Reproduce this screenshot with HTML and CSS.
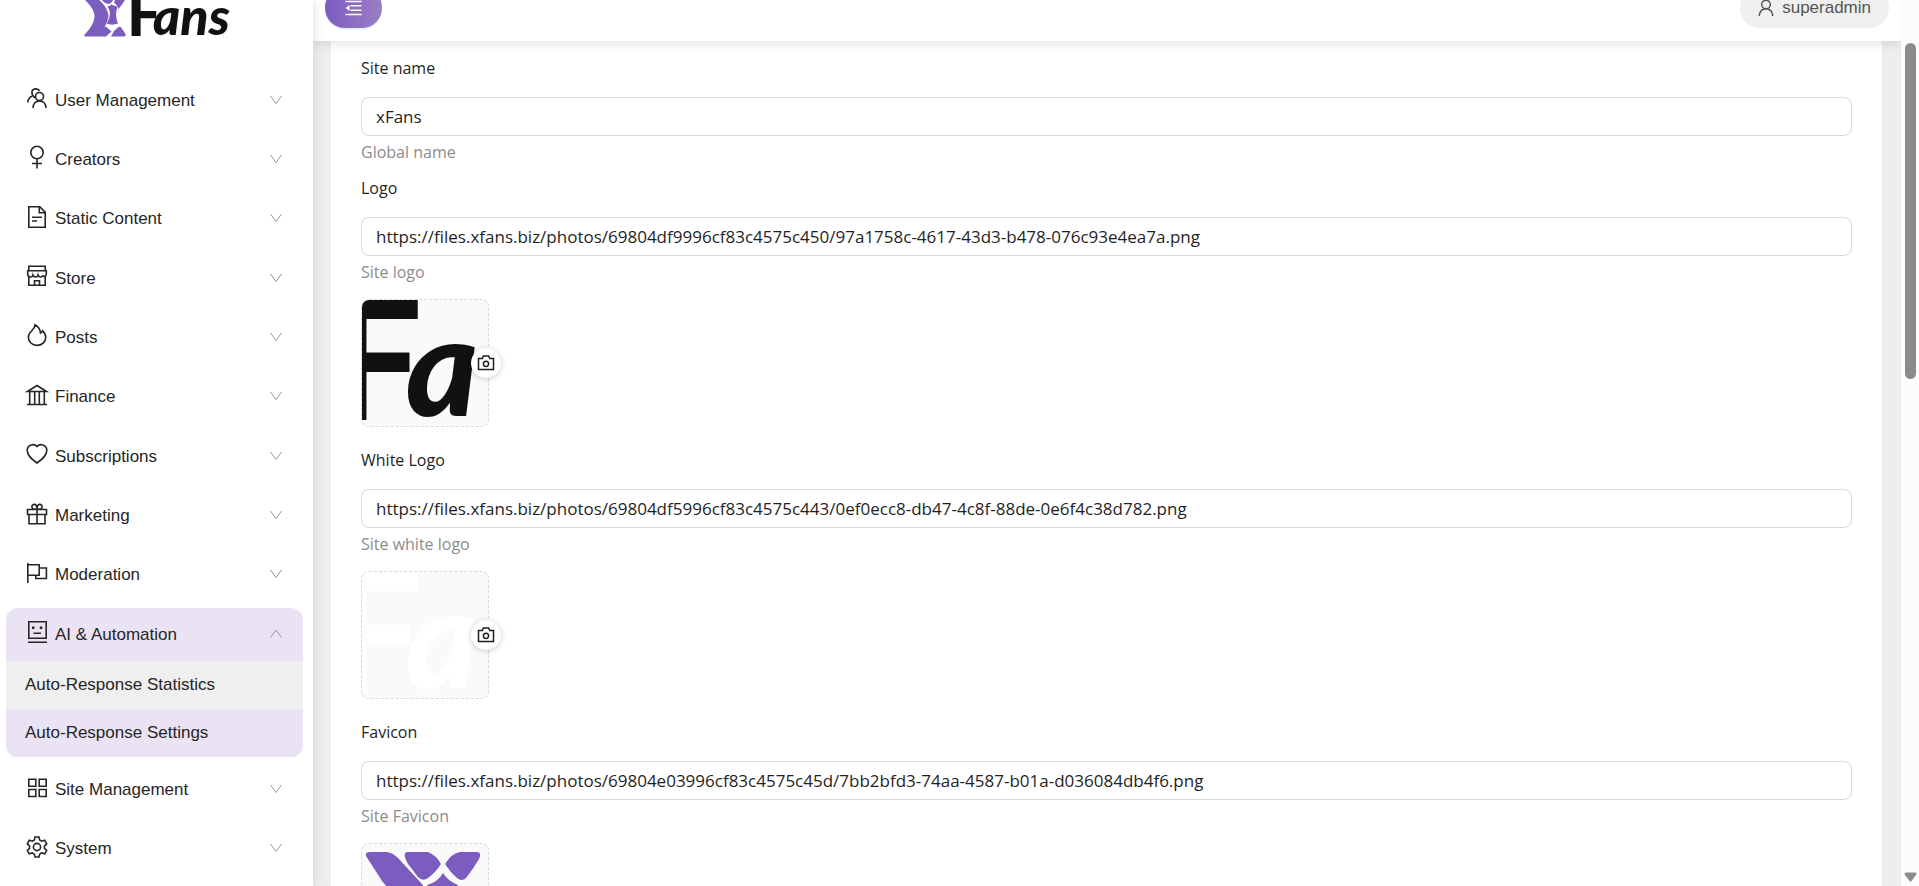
FILE: index.html
```html
<!DOCTYPE html>
<html lang="en">
<head>
    <meta charset="UTF-8">
    <meta name="viewport" content="width=device-width, initial-scale=1.0">
    <title>xFans - Site Settings</title>
    <link rel="stylesheet" href="styles.css">
</head>
<body>
    <!-- Shared icons -->
    <svg class="sprite" aria-hidden="true">
        <symbol id="down" viewBox="0 0 14 14"><path d="M1.5 3 7 10.5 12.5 3"/></symbol>
        <symbol id="up" viewBox="0 0 14 14"><path d="M1.5 10.5 7 3 12.5 10.5"/></symbol>
        <symbol id="camera" viewBox="0 0 18 16"><path d="M1.5 3.5h3.700l1.200-2.400h5.200l1.200 2.400h3.700v11h-15z"/><circle cx="9" cy="8.800" r="2.600"/></symbol>
    </svg>

    <div class="layout">
        <!-- Sidebar -->
        <aside class="sidebar">
            <a class="brand" href="#" aria-label="xFans">
                <svg class="brand-logo" viewBox="0 0 156 40">
                    <g class="brand-mark">
                        <path d="M1 0H15C20 4 24 10 24.500 16C23.500 23 19 30 15 36.500H1.500C0 36.500 0 35 1 34C6 29 10.500 22 10.500 16C10.500 10 5 4 1 0Z"/>
                        <path d="M17.500 0H29Q27 4 24 4Q20.500 3 17.500 0Z"/>
                        <path d="M31 0H41C39 3 36 7 34.500 9C33.500 6 32 4 30 2.500Z"/>
                        <path d="M27.500 4.500Q30 6 33.500 6.500C31.500 12 31.500 18 34 23.500C30 25 26 25 22.500 23.500C26 18 27.500 12 23.500 6.500Q26 6 27.500 4.500Z"/>
                        <path d="M15 36.500C14 36 16 33 19.500 28Q21 26 23 27.500L27.500 31.500L22 36.500Z"/>
                        <path d="M27 36.500L30 31L34 27.500Q36 26 37.500 28L41.500 34Q42 36.500 40 36.500Z"/>
                    </g>
                    <text x="43" y="36" class="logo-cap logo-cap-small">F</text>
                    <text x="69" y="35" class="logo-rest logo-rest-small">ans</text>
                </svg>
            </a>

            <nav class="menu">
                <button class="menu-item" type="button">
                    <svg class="icon" viewBox="0 0 22 22"><circle cx="13.500" cy="9.500" r="4"/><path d="M7 21c.3-4.500 3-7 6.500-7s6.200 2.500 6.500 7M9.500 11C5 8.500 4.500 2.500 9.300 1.900c2-.2 3.500.5 4.200 2M1.700 15.500c.2-3 1.800-5.300 4.400-6.300"/></svg>
                    <span>User Management</span>
                    <svg class="arrow"><use href="#down"/></svg>
                </button>
                <button class="menu-item" type="button">
                    <svg class="icon" viewBox="0 0 22 22"><circle cx="11" cy="6.500" r="6.200"/><path d="M11 13v9.500M6 17.500h10"/></svg>
                    <span>Creators</span>
                    <svg class="arrow"><use href="#down"/></svg>
                </button>
                <button class="menu-item" type="button">
                    <svg class="icon" viewBox="0 0 22 22"><path d="M2.800.8h11l5.400 5.400v15H2.800zM13.300.8v6h6M6 11.300h10M6 15h5"/></svg>
                    <span>Static Content</span>
                    <svg class="arrow"><use href="#down"/></svg>
                </button>
                <button class="menu-item" type="button">
                    <svg class="icon" viewBox="0 0 22 22"><path d="M2.800 1.300h16.400v4.500H2.800zM2.500 5.800H1.700v3.500c0 3.300 4.600 3.500 5.200.8.800 2.600 4.500 2.600 5.100 0 .8 2.600 4.400 2.600 5 0 .6 2.700 3.300 1.500 3.300-1.500V5.800h-1M2.800 11.500v8.700h16.400v-8.700M8.500 20v-4.300h5V20"/></svg>
                    <span>Store</span>
                    <svg class="arrow"><use href="#down"/></svg>
                </button>
                <button class="menu-item" type="button">
                    <svg class="icon" viewBox="0 0 22 22"><path d="M9 .8c3.500 2 5.300 5 5.500 8.300 1.200-.6 1.800-1.400 2.100-2.300 2 1.700 3.100 4 3.100 6.400 0 4.700-3.900 8.200-8.700 8.200s-8.600-3.600-8.600-8.200c0-3 1.600-5 3.600-6.700C8 4.800 9 3 9 .8z"/></svg>
                    <span>Posts</span>
                    <svg class="arrow"><use href="#down"/></svg>
                </button>
                <button class="menu-item" type="button">
                    <svg class="icon" viewBox="0 0 22 22"><path d="M1.500 7.500 11 1.500l9.500 6zM1 20.500h20M3.700 8v12M8.700 8v12M13.300 8v12M18.300 8v12"/></svg>
                    <span>Finance</span>
                    <svg class="arrow"><use href="#down"/></svg>
                </button>
                <button class="menu-item" type="button">
                    <svg class="icon" viewBox="0 0 22 22"><path d="M11 20C5.500 16 1.200 12.500 1.200 7.500c0-5.600 7-7.500 9.800-4 2.800-3.500 9.800-1.600 9.800 4C20.800 12.500 16.500 16 11 20z"/></svg>
                    <span>Subscriptions</span>
                    <svg class="arrow"><use href="#down"/></svg>
                </button>
                <button class="menu-item" type="button">
                    <svg class="icon" viewBox="0 0 22 22"><path d="M1.500 6.500h19v5h-19zM3 11.500v9.300h16v-9.300M11 6.500v14"/><path d="M11 6.300H8.500C5 6.300 5 1.400 8.300 1.400c2 0 2.700 1.800 2.700 4.900zM11 6.300h2.500c3.500 0 3.500-4.900.2-4.900-2 0-2.700 1.800-2.700 4.900z"/></svg>
                    <span>Marketing</span>
                    <svg class="arrow"><use href="#down"/></svg>
                </button>
                <button class="menu-item" type="button">
                    <svg class="icon" viewBox="0 0 22 22"><path d="M1.800 1v20M1.800 2.800h11.400v10.400H1.800M13.200 6h7.200v10.500H9.800v-3.300"/></svg>
                    <span>Moderation</span>
                    <svg class="arrow"><use href="#down"/></svg>
                </button>

                <!-- Opened group -->
                <div class="menu-group">
                    <button class="menu-item" type="button" aria-expanded="true">
                        <svg class="icon" viewBox="0 0 22 22"><path d="M2.800.8h17.400v16.400H2.800zM2 21.200h19M7.500 12.200h7.500"/><path class="solid" d="M6 5.500h2.500V8H6zM13.800 5.500h2.500V8h-2.500z"/></svg>
                        <span>AI &amp; Automation</span>
                        <svg class="arrow"><use href="#up"/></svg>
                    </button>
                    <a class="submenu-item" href="#">Auto-Response Statistics</a>
                    <a class="submenu-item active" href="#">Auto-Response Settings</a>
                </div>

                <button class="menu-item" type="button">
                    <svg class="icon" viewBox="0 0 22 22"><path d="M2.800 2.300h7v7h-7zM13.200 2.300h7v7h-7zM2.800 12.500h7v7h-7zM13.200 12.500h7v7h-7z"/></svg>
                    <span>Site Management</span>
                    <svg class="arrow"><use href="#down"/></svg>
                </button>
                <button class="menu-item" type="button">
                    <svg class="icon" viewBox="0 0 22 22"><circle cx="11" cy="11" r="3.600"/><path d="M9 1h4l.6 2.900 2.200 1.300 2.900-.9 2 3.500-2.200 2v2.500l2.200 2-2 3.500-2.900-.9-2.200 1.300L13 21H9l-.6-2.800-2.200-1.300-2.900.9-2-3.500 2.200-2V9.800l-2.200-2 2-3.500 2.900.9 2.200-1.300z"/></svg>
                    <span>System</span>
                    <svg class="arrow"><use href="#down"/></svg>
                </button>
            </nav>
        </aside>

        <div class="main">
            <!-- Top bar -->
            <header class="header">
                <button class="toggle" type="button" aria-label="Collapse menu">
                    <svg viewBox="0 0 16 16"><path d="M0 1.500h16M5 5.700h11M5 10.200h11M0 14.500h16"/><path class="solid" d="M0 8l4-3v6z"/></svg>
                </button>
                <button class="account" type="button">
                    <svg viewBox="0 0 16 18"><circle cx="8" cy="5.500" r="4.300"/><path d="M1.200 17c.4-4.500 3-7.200 6.800-7.200s6.400 2.700 6.800 7.200"/></svg>
                    <span>superadmin</span>
                </button>
            </header>

            <!-- Settings form -->
            <main class="content">
                <form class="card">
                    <div class="field">
                        <label for="site-name">Site name</label>
                        <input id="site-name" type="text" value="xFans">
                        <p class="help">Global name</p>
                    </div>

                    <div class="field">
                        <label for="logo">Logo</label>
                        <input id="logo" type="text" value="https://files.xfans.biz/photos/69804df9996cf83c4575c450/97a1758c-4617-43d3-b478-076c93e4ea7a.png">
                        <p class="help">Site logo</p>
                        <div class="upload">
                            <div class="preview">
                                <svg viewBox="0 0 126 126">
                                    <text x="-33" y="120" class="logo-cap">F</text>
                                    <text x="44" y="116" class="logo-rest">a</text>
                                </svg>
                            </div>
                            <button class="camera" type="button" aria-label="Upload logo"><svg><use href="#camera"/></svg></button>
                        </div>
                    </div>

                    <div class="field">
                        <label for="white-logo">White Logo</label>
                        <input id="white-logo" type="text" value="https://files.xfans.biz/photos/69804df5996cf83c4575c443/0ef0ecc8-db47-4c8f-88de-0e6f4c38d782.png">
                        <p class="help">Site white logo</p>
                        <div class="upload">
                            <div class="preview preview-white">
                                <svg viewBox="0 0 126 126">
                                    <text x="-33" y="120" class="logo-cap">F</text>
                                    <text x="44" y="116" class="logo-rest">a</text>
                                </svg>
                            </div>
                            <button class="camera" type="button" aria-label="Upload white logo"><svg><use href="#camera"/></svg></button>
                        </div>
                    </div>

                    <div class="field">
                        <label for="favicon">Favicon</label>
                        <input id="favicon" type="text" value="https://files.xfans.biz/photos/69804e03996cf83c4575c45d/7bb2bfd3-74aa-4587-b01a-d036084db4f6.png">
                        <p class="help">Site Favicon</p>
                        <div class="upload">
                            <div class="preview">
                                <svg class="brand-mark" viewBox="0 0 126 126">
                                    <path d="M4 12Q3 8 8 8H24Q30 8 36 14L60 40Q68 52 68 63Q60 90 42 118H6Q4 116 8 110Q32 84 34 63Q30 48 20 37Z"/>
                                    <path d="M45 8H66Q74 11 79 20Q74 28 66 34Q61 38 56 33L46 20Q40 9 45 8Z"/>
                                    <path d="M83 20Q90 9 98 8H115Q120 8 117 15Q112 24 104 34Q100 38 95 34Q88 28 83 20Z"/>
                                    <path d="M81 29Q86 37 96 41Q86 62 96 86Q80 92 64 86Q78 62 65 41Q76 38 81 29Z"/>
                                </svg>
                            </div>
                            <button class="camera" type="button" aria-label="Upload favicon"><svg><use href="#camera"/></svg></button>
                        </div>
                    </div>
                </form>
            </main>
        </div>

        <!-- Scroll track -->
        <div class="scrollbar" aria-hidden="true">
            <div class="scrollbar-thumb"></div>
            <svg class="scrollbar-arrow" viewBox="0 0 13 10"><path d="M1.500.5h10q1.500.5.8 2L7.500 9q-1 1-2 0L.7 2.500q-.7-1.500.8-2z"/></svg>
        </div>
    </div>
</body>
</html>
```
FILE: styles.css
```css
* {
    box-sizing: border-box;
}

body {
    margin: 0;
    overflow: hidden;
    background: #eee;
    color: #1f1f1f;
    font-family: "Open Sans", "Noto Sans", sans-serif;
    font-size: 16px;
    line-height: 24px;
}

button,
input {
    font: inherit;
    color: inherit;
}

button {
    border: 0;
    cursor: pointer;
}

svg {
    display: block;
    fill: none;
    stroke: currentColor;
}

.sprite {
    position: absolute;
    width: 0;
    height: 0;
}

.solid {
    fill: currentColor;
    stroke: none;
}

.layout {
    display: flex;
    height: 100vh;
}

/* Sidebar */
.sidebar {
    display: flex;
    flex-direction: column;
    flex: 0 0 313px;
    padding: 0 10px 10px 6px;
    background: #fff;
    box-shadow: 0 0 12px rgba(0, 0, 0, 0.12);
    color: #262626;
    font-family: "Liberation Sans", Arial, sans-serif;
    font-size: 17px;
    z-index: 3;
}

.brand {
    display: block;
    height: 74px;
    padding-left: 78px;
}

.brand-logo {
    width: 156px;
    height: 40px;
}

.brand-mark,
.brand-mark path {
    fill: #7c5cbf;
    stroke: none;
}

.logo-cap,
.logo-rest {
    fill: #111;
    stroke: none;
    font-family: Lato, sans-serif;
    font-weight: 900;
}

.logo-cap {
    font-size: 165px;
}

.logo-rest {
    font-size: 138px;
    font-style: italic;
}

.logo-cap-small {
    font-size: 60px;
}

.logo-rest-small {
    font-size: 52px;
}

.menu {
    display: flex;
    flex: 1;
    flex-direction: column;
    justify-content: space-between;
}

.menu-item {
    display: flex;
    align-items: center;
    gap: 7px;
    width: 100%;
    height: 53px;
    padding: 0 20px;
    background: none;
    text-align: left;
}

.icon {
    width: 22px;
    height: 22px;
    margin-bottom: 5px;
    overflow: visible;
    stroke-width: 1.6;
}

.arrow {
    width: 14px;
    height: 14px;
    margin: 0 0 2px auto;
    color: #999;
}

.menu-group {
    overflow: hidden;
    border-radius: 12px;
    background: #eae3f4;
}

.submenu-item {
    display: block;
    padding: 12px 19px;
    background: #efefef;
    color: inherit;
    text-decoration: none;
}

.submenu-item.active {
    background: #eae3f4;
}

/* Top bar */
.main {
    display: flex;
    flex: 1;
    flex-direction: column;
    min-width: 0;
}

/* The buttons are taller than the bar and run off its top edge */
.header {
    display: flex;
    align-items: flex-end;
    justify-content: space-between;
    height: 41px;
    min-height: 41px;
    padding: 0 12px 13px;
    background: #fff;
    box-shadow: 0 2px 12px rgba(0, 0, 0, 0.12);
    z-index: 2;
}

.toggle {
    flex: none;
    height: 41px;
    padding: 0 20px;
    border-radius: 20px;
    background: linear-gradient(90deg, #7c5cbf, #9b7fc4);
    box-shadow: 0 2px 0 rgba(5, 145, 255, 0.1);
    color: #fff;
}

.toggle svg {
    width: 17px;
    height: 16px;
    stroke-width: 1.5;
}

.account {
    display: flex;
    flex: none;
    align-items: center;
    gap: 8px;
    height: 41px;
    padding: 0 18px;
    border-radius: 20px;
    background: #efefef;
    color: #555;
    font-family: "Liberation Sans", Arial, sans-serif;
    font-size: 17px;
}

.account svg {
    width: 16px;
    height: 18px;
    stroke-width: 1.5;
}

/* Settings form */
.content {
    flex: 1;
    min-height: 0;
    padding: 0 19px 0 18px;
    overflow: hidden;
}

.card {
    padding: 15px 30px;
    background: #fff;
}

.field {
    display: flex;
    flex-direction: column;
    margin-bottom: 12px;
}

.field label {
    margin-bottom: 17px;
}

.field input {
    height: 39px;
    padding: 0 14px;
    border: 1px solid #d9d9d9;
    border-radius: 8px;
    background: #fff;
    font-size: 17px;
}

.help {
    margin: 4px 0 0;
    color: #8c8c8c;
}

.upload {
    position: relative;
    width: 128px;
    margin: 15px 0 9px;
}

.preview {
    height: 128px;
    overflow: hidden;
    border: 1px dashed #d9d9d9;
    border-radius: 8px;
    background: #fafafa;
}

.preview-white text {
    fill: #fff;
}

.camera {
    position: absolute;
    top: 49px;
    right: -12px;
    display: flex;
    align-items: center;
    justify-content: center;
    width: 30px;
    height: 30px;
    padding: 0;
    border-radius: 50%;
    background: #fff;
    box-shadow: 0 1px 6px rgba(0, 0, 0, 0.2);
}

.camera svg {
    width: 18px;
    height: 16px;
    stroke-width: 1.5;
}

/* Scroll track */
.scrollbar {
    display: flex;
    flex: 0 0 18px;
    flex-direction: column;
    align-items: center;
    justify-content: space-between;
    padding: 43px 0 4px;
    background: #fcfcfc;
    z-index: 3;
}

.scrollbar-thumb {
    width: 11px;
    height: 40%;
    border-radius: 6px;
    background: #8b8b8b;
}

.scrollbar-arrow {
    width: 13px;
    height: 10px;
    fill: #8b8b8b;
    stroke: none;
}
```
